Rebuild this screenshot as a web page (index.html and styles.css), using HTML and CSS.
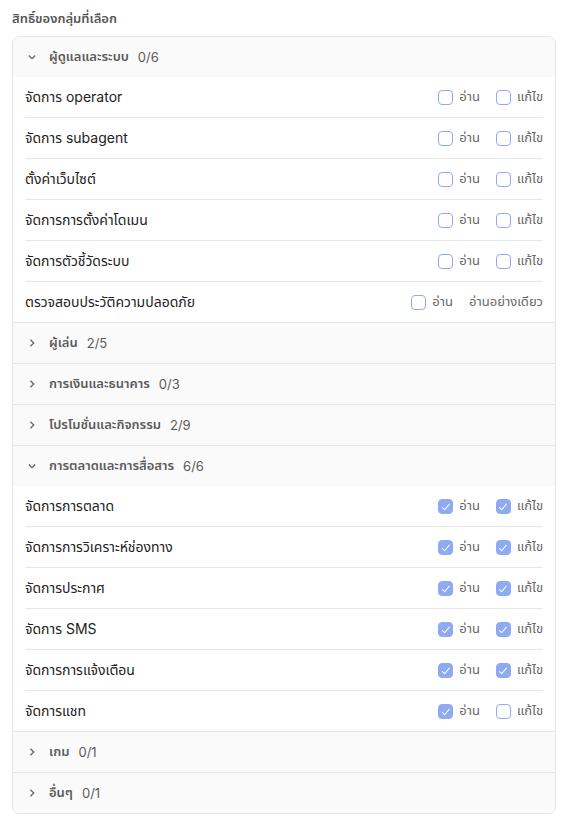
FILE: index.html
```html
<!DOCTYPE html>
<html lang="th">
<head>
    <meta charset="UTF-8">
    <meta name="viewport" content="width=device-width, initial-scale=1.0">
    <title>สิทธิ์ของกลุ่ม</title>
    <link rel="stylesheet" href="styles.css">
</head>
<body>
    <div class="title">สิทธิ์ของกลุ่มที่เลือก</div>
    <div class="perm-box">
        <div class="group">
            <div class="group-head"><svg class="chev" viewBox="0 0 10 10"><path d="M1.8 3.5 5 6.7 8.2 3.5"/></svg><span class="g-name">ผู้ดูแลและระบบ</span><span class="g-count">0/6</span></div>
            <div class="row"><span class="r-name">จัดการ operator</span><div class="opts"><label class="opt"><span class="cb"></span>อ่าน</label><label class="opt"><span class="cb"></span>แก้ไข</label></div></div>
            <div class="row"><span class="r-name">จัดการ subagent</span><div class="opts"><label class="opt"><span class="cb"></span>อ่าน</label><label class="opt"><span class="cb"></span>แก้ไข</label></div></div>
            <div class="row"><span class="r-name">ตั้งค่าเว็บไซต์</span><div class="opts"><label class="opt"><span class="cb"></span>อ่าน</label><label class="opt"><span class="cb"></span>แก้ไข</label></div></div>
            <div class="row"><span class="r-name">จัดการการตั้งค่าโดเมน</span><div class="opts"><label class="opt"><span class="cb"></span>อ่าน</label><label class="opt"><span class="cb"></span>แก้ไข</label></div></div>
            <div class="row"><span class="r-name">จัดการตัวชี้วัดระบบ</span><div class="opts"><label class="opt"><span class="cb"></span>อ่าน</label><label class="opt"><span class="cb"></span>แก้ไข</label></div></div>
            <div class="row"><span class="r-name">ตรวจสอบประวัติความปลอดภัย</span><div class="opts"><label class="opt"><span class="cb"></span>อ่าน</label><span class="opt">อ่านอย่างเดียว</span></div></div>
        </div>
        <div class="group">
            <div class="group-head"><svg class="chev" viewBox="0 0 10 10"><path d="M3.5 1.8 6.7 5 3.5 8.2"/></svg><span class="g-name">ผู้เล่น</span><span class="g-count">2/5</span></div>
        </div>
        <div class="group">
            <div class="group-head"><svg class="chev" viewBox="0 0 10 10"><path d="M3.5 1.8 6.7 5 3.5 8.2"/></svg><span class="g-name">การเงินและธนาคาร</span><span class="g-count">0/3</span></div>
        </div>
        <div class="group">
            <div class="group-head"><svg class="chev" viewBox="0 0 10 10"><path d="M3.5 1.8 6.7 5 3.5 8.2"/></svg><span class="g-name">โปรโมชั่นและกิจกรรม</span><span class="g-count">2/9</span></div>
        </div>
        <div class="group">
            <div class="group-head"><svg class="chev" viewBox="0 0 10 10"><path d="M1.8 3.5 5 6.7 8.2 3.5"/></svg><span class="g-name">การตลาดและการสื่อสาร</span><span class="g-count">6/6</span></div>
            <div class="row"><span class="r-name">จัดการการตลาด</span><div class="opts"><label class="opt"><span class="cb on"></span>อ่าน</label><label class="opt"><span class="cb on"></span>แก้ไข</label></div></div>
            <div class="row"><span class="r-name">จัดการการวิเคราะห์ช่องทาง</span><div class="opts"><label class="opt"><span class="cb on"></span>อ่าน</label><label class="opt"><span class="cb on"></span>แก้ไข</label></div></div>
            <div class="row"><span class="r-name">จัดการประกาศ</span><div class="opts"><label class="opt"><span class="cb on"></span>อ่าน</label><label class="opt"><span class="cb on"></span>แก้ไข</label></div></div>
            <div class="row"><span class="r-name">จัดการ SMS</span><div class="opts"><label class="opt"><span class="cb on"></span>อ่าน</label><label class="opt"><span class="cb on"></span>แก้ไข</label></div></div>
            <div class="row"><span class="r-name">จัดการการแจ้งเตือน</span><div class="opts"><label class="opt"><span class="cb on"></span>อ่าน</label><label class="opt"><span class="cb on"></span>แก้ไข</label></div></div>
            <div class="row"><span class="r-name">จัดการแชท</span><div class="opts"><label class="opt"><span class="cb on"></span>อ่าน</label><label class="opt"><span class="cb"></span>แก้ไข</label></div></div>
        </div>
        <div class="group">
            <div class="group-head"><svg class="chev" viewBox="0 0 10 10"><path d="M3.5 1.8 6.7 5 3.5 8.2"/></svg><span class="g-name">เกม</span><span class="g-count">0/1</span></div>
        </div>
        <div class="group">
            <div class="group-head"><svg class="chev" viewBox="0 0 10 10"><path d="M3.5 1.8 6.7 5 3.5 8.2"/></svg><span class="g-name">อื่นๆ</span><span class="g-count">0/1</span></div>
        </div>
    </div>
</body>
</html>
```
FILE: styles.css
```css
body{
    margin: 0;
    padding: 8px 12px;
    font-family: Inter, "Noto Sans Thai", sans-serif;
    color: #222;
    background: #fff;
}
.title{
    font-size: 13px;
    font-weight: 600;
    color: #555;
    height: 20px;
    line-height: 20px;
    margin-bottom: 8px;
}
.perm-box{
    border: 1px solid #e5e5e5;
    border-radius: 7px;
    overflow: hidden;
}
.group + .group{
    border-top: 1px solid #e5e5e5;
}
.group-head{
    height: 40px;
    display: flex;
    align-items: center;
    padding-left: 14px;
    background: #fafafa;
    font-size: 13px;
    color: #5a5a5a;
}
.chev{
    width: 10px;
    height: 10px;
    fill: none;
    stroke: #666;
    stroke-width: 1.3;
    margin-right: 12px;
}
.g-name{
    font-weight: 600;
    margin-right: 9px;
}
.row{
    height: 40px;
    margin: 0 12px;
    display: flex;
    align-items: center;
    justify-content: space-between;
}
.row + .row{
    border-top: 1px solid #e8e8e8;
}
.r-name{
    font-size: 14px;
}
.opts{
    display: flex;
    gap: 16px;
}
.opt{
    display: flex;
    align-items: center;
    font-size: 13px;
    color: #666;
}
.cb{
    width: 13px;
    height: 13px;
    border: 1px solid #8eaaf2;
    border-radius: 4px;
    margin-right: 6px;
    position: relative;
}
.cb.on{
    background: #8eaaf2;
}
.cb.on::after{
    content: "";
    position: absolute;
    left: 4.5px;
    top: 2px;
    width: 3px;
    height: 6.5px;
    border: solid #fff;
    border-width: 0 1.2px 1.2px 0;
    transform: rotate(40deg);
}
```
